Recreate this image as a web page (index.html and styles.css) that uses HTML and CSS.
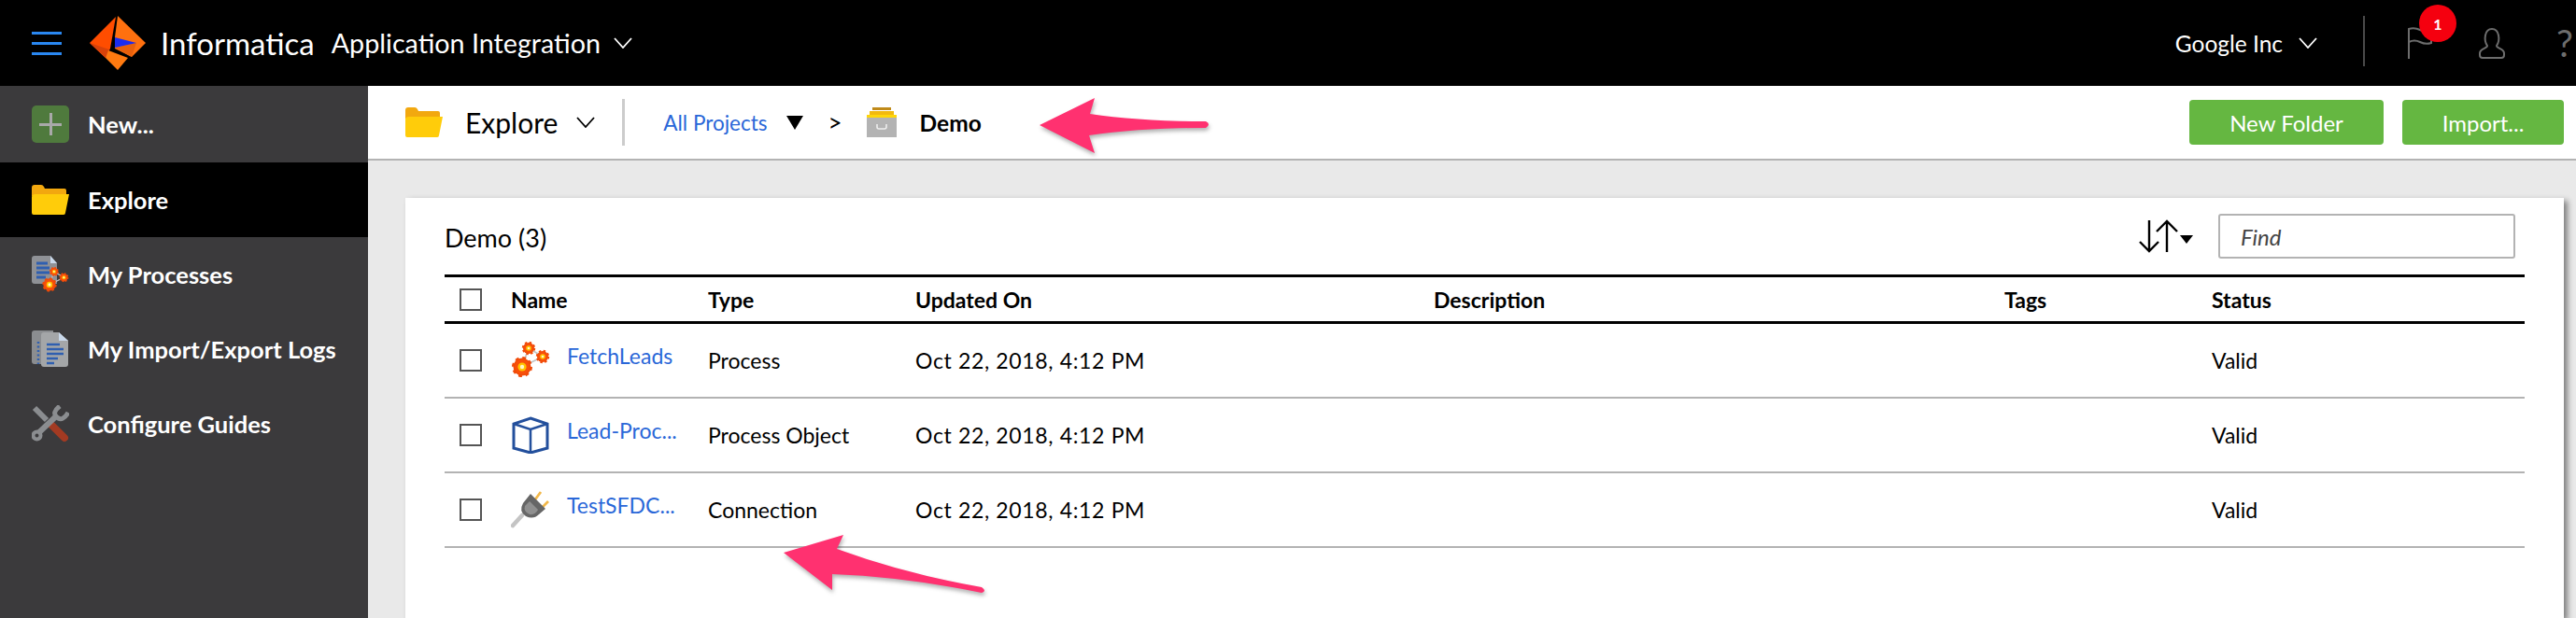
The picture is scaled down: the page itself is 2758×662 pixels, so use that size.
FILE: index.html
```html
<!DOCTYPE html>
<html lang="en">

<head>
	<meta charset="UTF-8">
	<meta name="viewport" content="width=device-width, initial-scale=1.0">
	<title>Explore - Application Integration</title>
	<link rel="stylesheet" href="styles.css">
</head>

<body>
	<svg class="svg-defs" width="0" height="0">
		<defs>
			<symbol id="folder" viewBox="0 0 40 32">
				<path d="M0 3q0-3 3-3h7q2 0 3 2l1 2h21q2 0 2 2v6H0z" fill="#f2a80f" />
				<path d="M4 10h36l-4 20q0 2-2 2H2q-2 0-2-2V13q0-3 4-3z" fill="#ffcc0a" />
			</symbol>
			<symbol id="gears" viewBox="0 0 42 40">
				<path d="M12 27L19 7L34 16z" fill="none" stroke="#c4c4c4" stroke-width="1.8" />
				<circle cx="12" cy="27" r="9.5" fill="#f04a08" stroke="#f04a08" stroke-width="3" stroke-dasharray="3.7 3.76" />
				<circle cx="12" cy="27" r="8" fill="#f8500a" />
				<circle cx="12" cy="27" r="4.6" fill="#ffc400" />
				<circle cx="12" cy="27" r="2.2" fill="#fff6c8" />
				<circle cx="19" cy="7" r="6" fill="#f04a08" stroke="#f04a08" stroke-width="2.4" stroke-dasharray="2.35 2.36" />
				<circle cx="19" cy="7" r="5" fill="#f8500a" />
				<circle cx="19" cy="7" r="2.8" fill="#ffc400" />
				<circle cx="19" cy="7" r="1.3" fill="#fff6c8" />
				<circle cx="34" cy="16" r="6" fill="#f04a08" stroke="#f04a08" stroke-width="2.4" stroke-dasharray="2.35 2.36" />
				<circle cx="34" cy="16" r="5" fill="#f8500a" />
				<circle cx="34" cy="16" r="2.8" fill="#ffc400" />
				<circle cx="34" cy="16" r="1.3" fill="#fff6c8" />
			</symbol>
		</defs>
	</svg>

	<header class="topbar">
		<div class="brand">
			<div class="hamburger"><span></span><span></span><span></span></div>
			<svg class="logo" viewBox="0 0 60 60">
				<polygon points="28,2 0,30 17,46 22,36" fill="#ff4d00" />
				<polygon points="0,30 17,46 21,37" fill="#d8420a" />
				<polygon points="30,1 60,30 45,45 27,36 27,24" fill="#ff700f" />
				<polygon points="27,35 50,30 45,45" fill="#e8600c" />
				<polygon points="20,38 41,46 30,59 17,46" fill="#ff7a10" />
				<polygon points="27,24 50,30 27,35" fill="#1a2cf0" />
			</svg>
			<span class="brand-name">Informatica</span>
			<span class="app-name">Application Integration</span>
			<svg class="chevron" viewBox="0 0 20 12"><path d="M1 1l9 10 9-10" /></svg>
		</div>
		<div class="top-right">
			<span class="org-name">Google Inc</span>
			<svg class="chevron" viewBox="0 0 20 12"><path d="M1 1l9 10 9-10" /></svg>
			<div class="top-divider"></div>
			<div class="flag-wrap">
				<svg class="flag" viewBox="0 0 28 34" fill="none" stroke="#6d6d6d" stroke-width="2">
					<path d="M2 34V2q6-2 12 1t12 1v13q-6 2-12-1t-12 0" />
				</svg>
				<span class="badge">1</span>
			</div>
			<svg class="user" viewBox="0 0 30 34" fill="none" stroke="#6d6d6d" stroke-width="2">
				<path d="M10 20C6 14 7 2 15 2s9 12 5 18c0 3 8 3 8 8v2q0 3-3 3H5q-3 0-3-3v-2c0-5 8-5 8-8z" />
			</svg>
			<span class="help">?</span>
		</div>
	</header>

	<div class="layout">
		<aside class="sidebar">
			<div class="side-item">
				<span class="plus-box"></span>
				<span>New...</span>
			</div>
			<div class="side-item active">
				<svg class="side-icon"><use href="#folder" /></svg>
				<span>Explore</span>
			</div>
			<div class="side-item">
				<svg class="side-icon" viewBox="0 0 40 40">
					<path d="M3 0h17l7 8v22H3q-3 0-3-3V3q0-3 3-3z" fill="#8f9196" />
					<path d="M20 0l7 8h-7z" fill="#c9d8ea" />
					<path d="M5 8h12M5 13h14M5 18h14M5 23h10" stroke="#2f5fb0" stroke-width="3" />
					<use href="#gears" x="10.6" y="12" width="29.4" height="28" />
				</svg>
				<span>My Processes</span>
			</div>
			<div class="side-item">
				<svg class="side-icon" viewBox="0 0 40 40">
					<path d="M3 0h20v36H3q-3 0-3-3V3q0-3 3-3z" fill="#8b8d90" />
					<path d="M13 2h16l10 9v25q0 3-3 3H13q-3 0-3-3V5q0-3 3-3z" fill="#a4a6a8" />
					<path d="M29 2l10 9H29z" fill="#c9d8ea" />
					<path d="M16 15h14M16 20h18M16 25h18M16 30h12M16 35h8" stroke="#2f5fb0" stroke-width="2.5" />
					<path d="M7 12v24" stroke="#2f5fb0" stroke-width="2.5" stroke-dasharray="2 2.5" />
				</svg>
				<span>My Import/Export Logs</span>
			</div>
			<div class="side-item">
				<svg class="side-icon" viewBox="0 0 40 40" fill="none">
					<path d="M3 3L16 16" stroke="#8b8d90" stroke-width="6" />
					<path d="M21 21L35 35" stroke="#a33a22" stroke-width="8" stroke-linecap="round" />
					<path d="M7 30L27 11" stroke="#8b8d90" stroke-width="6" />
					<circle cx="5.5" cy="32.5" r="4" stroke="#8b8d90" stroke-width="4" />
					<path d="M30 1Q21 8 27 13Q33 18 39 8" stroke="#8b8d90" stroke-width="5" />
				</svg>
				<span>Configure Guides</span>
			</div>
		</aside>

		<main class="main">
			<div class="toolbar">
				<div class="crumbs">
					<svg class="side-icon"><use href="#folder" /></svg>
					<span class="explore-label">Explore</span>
					<svg class="chevron dark" viewBox="0 0 20 12"><path d="M1 1l9 10 9-10" /></svg>
					<div class="toolbar-divider"></div>
					<a href="#" class="crumb-link">All Projects</a>
					<span class="crumb-caret"></span>
					<span class="crumb-sep">&gt;</span>
					<svg class="archive" viewBox="0 0 32 32">
						<rect x="6" y="0" width="20" height="3" fill="#c08a1a" />
						<rect x="3" y="4" width="26" height="4" fill="#f2b90f" />
						<rect x="0" y="8" width="32" height="3" fill="#ffd60a" />
						<rect x="0" y="11" width="32" height="21" fill="#b3b3b3" />
						<path d="M11 18v3q0 2 2 2h6q2 0 2-2v-3" fill="none" stroke="#eee" stroke-width="1.6" />
					</svg>
					<span class="crumb-current">Demo</span>
				</div>
				<div class="toolbar-actions">
					<button class="btn btn-folder">New Folder</button>
					<button class="btn btn-import">Import...</button>
				</div>
			</div>

			<div class="content">
				<section class="card">
					<div class="card-head">
						<span class="card-title">Demo (3)</span>
						<svg class="sort-icon" viewBox="0 0 60 36" fill="none" stroke="#000" stroke-width="2.4">
							<path d="M12 1v33M2 24l10 10 10-10" />
							<path d="M31 35V2M20 13L31 2l11 11" />
							<path d="M45 17h14l-7 9z" fill="#000" stroke="none" />
						</svg>
						<input class="find" type="text" placeholder="Find">
					</div>

					<div class="row row-head">
						<div><span class="check"></span></div>
						<div>Name</div>
						<div>Type</div>
						<div>Updated On</div>
						<div>Description</div>
						<div>Tags</div>
						<div>Status</div>
					</div>

					<div class="row">
						<div><span class="check"></span></div>
						<div class="name-cell">
							<svg class="row-icon"><use href="#gears" /></svg>
							<a href="#">FetchLeads</a>
						</div>
						<div>Process</div>
						<div class="date">Oct 22, 2018, 4:12 PM</div>
						<div></div>
						<div></div>
						<div>Valid</div>
					</div>

					<div class="row">
						<div><span class="check"></span></div>
						<div class="name-cell">
							<svg class="row-icon" viewBox="0 0 42 40" fill="none" stroke="#234f9c" stroke-width="3">
								<path d="M21 2l18 6v26l-18 5-18-5V8z" />
								<path d="M3 8l18 6 18-6M21 14v25" stroke-width="2.5" />
							</svg>
							<a href="#">Lead-Proc...</a>
						</div>
						<div>Process Object</div>
						<div class="date">Oct 22, 2018, 4:12 PM</div>
						<div></div>
						<div></div>
						<div>Valid</div>
					</div>

					<div class="row">
						<div><span class="check"></span></div>
						<div class="name-cell">
							<svg class="row-icon" viewBox="0 0 42 40">
								<path d="M2 37L12 26" stroke="#c4c4c4" stroke-width="4.5" stroke-linecap="round" />
								<path d="M26 9L32 1M34 17L40 11" stroke="#f2b84a" stroke-width="2.8" />
								<path d="M21 3L37 19L30 25Q24 31 16 27Q8 22 13 13z" fill="#666" />
								<path d="M20 11L29 20Q26 26 20 25Q13 22 15 16z" fill="#8f8f8f" />
							</svg>
							<a href="#">TestSFDC...</a>
						</div>
						<div>Connection</div>
						<div class="date">Oct 22, 2018, 4:12 PM</div>
						<div></div>
						<div></div>
						<div>Valid</div>
					</div>
				</section>
			</div>
		</main>
	</div>

	<!-- callout arrows pasted over the screenshot -->
	<svg class="arrow-layer" viewBox="0 0 2758 662">
		<path class="arrow" d="M1113 134L1172 105L1167 122Q1220 130 1291 130Q1297 133 1291 137Q1220 137 1166 145L1172 164z" />
		<path class="arrow" d="M839 592L903 573L896 588Q970 615 1051 629Q1057 633 1051 635Q970 618 891 615L891 632z" />
	</svg>
</body>

</html>
```

FILE: styles.css
```css
:root {
	--sidebar-bg: #3b3a3c;
	--link-color: #2a67d8;
	--line-color: #b3b3b3;
	--green: #65b741;
}

* {
	margin: 0;
	padding: 0;
	box-sizing: border-box;
}

html,
body {
	height: 100%;
	overflow: hidden;
}

body {
	display: flex;
	flex-direction: column;
	background-color: #e9e9e9;
	font-family: 'Lato', sans-serif;
	color: #000;
}

a {
	color: var(--link-color);
	text-decoration: none;
}

.svg-defs {
	position: absolute;
}

.topbar {
	height: 92px;
	flex-shrink: 0;
	background-color: #000;
	color: #fff;
	display: flex;
	justify-content: space-between;
	align-items: center;
}

.brand {
	display: flex;
	align-items: center;
	padding-left: 34px;
}

.hamburger {
	width: 32px;
	display: flex;
	flex-direction: column;
	gap: 8px;
}

.hamburger span {
	height: 3px;
	background-color: #2a87f0;
}

.logo {
	width: 60px;
	height: 60px;
	margin-left: 30px;
}

.brand-name {
	margin-left: 16px;
	font-size: 33px;
}

.app-name {
	margin-left: 18px;
	font-size: 28.7px;
}

.chevron {
	width: 20px;
	height: 12px;
	margin-left: 14px;
	fill: none;
	stroke: #fff;
	stroke-width: 1.8;
}

.chevron.dark {
	stroke: #000;
	margin-left: 20px;
}

.top-right {
	display: flex;
	align-items: center;
	height: 100%;
}

.org-name {
	font-size: 24.5px;
}

.top-right .chevron {
	margin-left: 17px;
}

.top-divider {
	width: 2px;
	height: 54px;
	margin: 0 45px 4px 49px;
	background-color: #4a4a4a;
}

.flag-wrap {
	position: relative;
	width: 28px;
	height: 34px;
}

.flag {
	width: 28px;
	height: 34px;
	display: block;
}

.badge {
	position: absolute;
	top: -24px;
	left: 13px;
	width: 40px;
	height: 40px;
	border-radius: 50%;
	background-color: #f5000f;
	color: #fff;
	font-size: 16px;
	font-weight: 700;
	display: flex;
	align-items: center;
	justify-content: center;
}

.user {
	width: 30px;
	height: 34px;
	margin-left: 48px;
}

.help {
	margin-left: 54px;
	margin-right: 3px;
	color: #6d6d6d;
	font-size: 40px;
	line-height: 1;
	width: 18px;
}

.layout {
	flex: 1;
	display: flex;
	min-height: 0;
}

.sidebar {
	width: 394px;
	flex-shrink: 0;
	background-color: var(--sidebar-bg);
}

.side-item {
	height: 80px;
	padding-left: 34px;
	display: flex;
	align-items: center;
	gap: 20px;
	color: #fff;
	font-size: 25.5px;
	font-weight: 700;
}

.side-item:first-child {
	height: 82px;
}

.side-item.active {
	background-color: #000;
}

.plus-box {
	width: 40px;
	height: 40px;
	border-radius: 5px;
	background-color: #4f7a3d;
	position: relative;
}

.plus-box::before,
.plus-box::after {
	content: "";
	position: absolute;
	background-color: #a9a9a9;
}

.plus-box::before {
	left: 8px;
	right: 8px;
	top: 19px;
	height: 3px;
}

.plus-box::after {
	top: 8px;
	bottom: 8px;
	left: 19px;
	width: 3px;
}

.side-icon {
	width: 40px;
	height: 40px;
	flex-shrink: 0;
}

.main {
	flex: 1;
	min-width: 0;
	display: flex;
	flex-direction: column;
}

.toolbar {
	height: 80px;
	flex-shrink: 0;
	background-color: #fff;
	border-bottom: 2px solid var(--line-color);
	padding: 0 13px 0 40px;
	display: flex;
	justify-content: space-between;
	align-items: center;
}

.crumbs {
	display: flex;
	align-items: center;
}

.explore-label {
	margin-left: 24px;
	font-size: 30px;
}

.toolbar-divider {
	width: 3px;
	height: 50px;
	margin: 0 41px 0 29px;
	background-color: #ccc;
}

.crumb-link {
	font-size: 22.5px;
}

.crumb-caret {
	margin-left: 20px;
	border-left: 9px solid transparent;
	border-right: 9px solid transparent;
	border-top: 15px solid #000;
}

.crumb-sep {
	margin-left: 27px;
	font-size: 26px;
}

.archive {
	width: 32px;
	height: 32px;
	margin-left: 26px;
}

.crumb-current {
	margin-left: 25px;
	font-size: 24.5px;
	font-weight: 700;
}

.toolbar-actions {
	display: flex;
	gap: 20px;
}

.btn {
	height: 48px;
	border: none;
	border-radius: 4px;
	background-color: var(--green);
	color: #fff;
	font-family: inherit;
	font-size: 24px;
	cursor: pointer;
}

.btn-folder {
	width: 208px;
}

.btn-import {
	width: 173px;
}

.content {
	flex: 1;
	padding: 40px 13px 0 40px;
	min-height: 0;
}

.card {
	height: 100%;
	min-height: 450px;
	background-color: #fff;
	box-shadow: 4px 3px 6px rgba(0, 0, 0, 0.45);
	padding: 0 42px;
}

.card-head {
	height: 82px;
	display: flex;
	align-items: center;
}

.card-title {
	flex: 1;
	font-size: 27px;
	padding-top: 2px;
}

.sort-icon {
	width: 60px;
	height: 36px;
	margin-right: 26px;
}

.find {
	width: 318px;
	height: 48px;
	margin-right: 10px;
	border: 2px solid var(--line-color);
	border-radius: 3px;
	padding-left: 22px;
	font-family: inherit;
	font-size: 24px;
	font-style: italic;
}

.find::placeholder {
	color: #444;
}

.row {
	display: grid;
	grid-template-columns: 71px 211px 222px 555px 611px 222px 1fr;
	align-items: center;
	height: 80px;
	border-bottom: 2px solid var(--line-color);
	font-size: 23px;
}

.row-head {
	height: 53px;
	border-top: 3px solid #000;
	border-bottom: 3px solid #000;
	font-weight: 700;
}

.row > div:first-child {
	padding-left: 16px;
}

.date {
	letter-spacing: 0.65px;
}

.check {
	display: block;
	width: 24px;
	height: 24px;
	border: 2px solid #555;
}

.name-cell {
	display: flex;
	align-items: center;
	gap: 18px;
}

.name-cell a {
	margin-bottom: 10px;
}

.row-icon {
	width: 42px;
	height: 40px;
	flex-shrink: 0;
}

.arrow-layer {
	position: absolute;
	top: 0;
	left: 0;
	width: 2758px;
	height: 662px;
	pointer-events: none;
}

.arrow {
	fill: #ff3170;
	filter: drop-shadow(1px 3px 2px rgba(0, 0, 0, 0.3));
}
```
